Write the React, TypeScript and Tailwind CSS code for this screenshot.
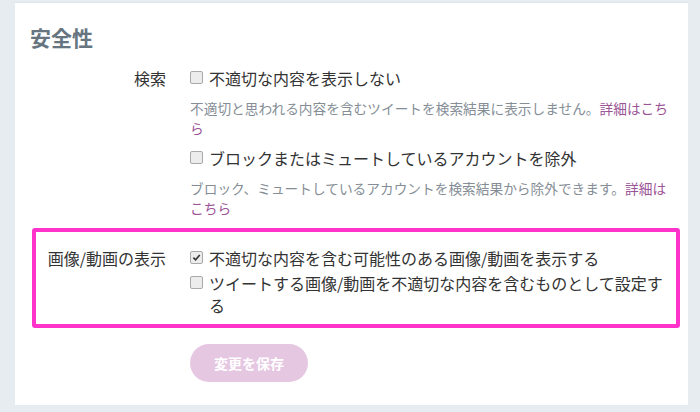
const font = { fontFamily: '"Noto Sans CJK JP", "Noto Sans", sans-serif' };

const Box = ({ checked = false }: { checked?: boolean }) => (
  <span className="mt-[4px] flex h-[13px] w-[13px] shrink-0 items-center justify-center rounded-[2px] border border-[#a9a9a9] bg-[#ececec]">
    {checked && (
      <svg viewBox="0 0 10 10" className="h-[9px] w-[9px]">
        <path d="M1.5 5.2 L4 7.6 L8.6 2.2" fill="none" stroke="#333" strokeWidth="1.8" />
      </svg>
    )}
  </span>
);

const Check = ({ label, checked }: { label: string; checked?: boolean }) => (
  <label className="flex items-start gap-[6px] text-[16px] leading-[22px] text-[#333]">
    <Box checked={checked} />
    <span>{label}</span>
  </label>
);

const Help = ({ text }: { text: string }) => (
  <p className="mt-[9px] text-[13.7px] leading-[20px] text-[#858e96]">
    {text}
    <a className="text-[#9b5596]">詳細はこちら</a>
  </p>
);

export default function App() {
  return (
    <div className="h-[412px] w-[700px] bg-[#e6ecf0] pl-[15px] pr-[12px] pt-[2px]" style={font}>
      <div className="border-t border-[#dfe4e8] bg-white px-[15px] pb-[23px] pt-[20px]">
        <h2 className="text-[21px] font-bold leading-[28px] text-[#66757f]">安全性</h2>

        <div className="mt-[16px] flex gap-[24px]">
          <div className="w-[136px] text-right text-[16px] leading-[22px] text-[#333]">検索</div>
          <div className="w-[482px]">
            <Check label="不適切な内容を表示しない" />
            <Help text="不適切と思われる内容を含むツイートを検索結果に表示しません。" />
            <div className="mt-[9px]">
              <Check label="ブロックまたはミュートしているアカウントを除外" />
            </div>
            <Help text="ブロック、ミュートしているアカウントを検索結果から除外できます。" />
          </div>
        </div>

        <div className="ml-[2px] mr-[-7px] mt-[10px] flex gap-[24px] rounded-[3px] border-[4px] border-[#ff33cc] pb-[8px] pt-[15px]">
          <div className="w-[130px] text-right text-[16px] leading-[22px] text-[#333]">画像/動画の表示</div>
          <div className="flex w-[482px] flex-col gap-[3px]">
            <Check label="不適切な内容を含む可能性のある画像/動画を表示する" checked />
            <Check label="ツイートする画像/動画を不適切な内容を含むものとして設定する" />
          </div>
        </div>

        <div className="ml-[160px] mt-[16px]">
          <button className="h-[38px] w-[118px] rounded-full bg-[#e6c7e2] text-[14px] font-bold text-white">
            変更を保存
          </button>
        </div>
      </div>
    </div>
  );
}
